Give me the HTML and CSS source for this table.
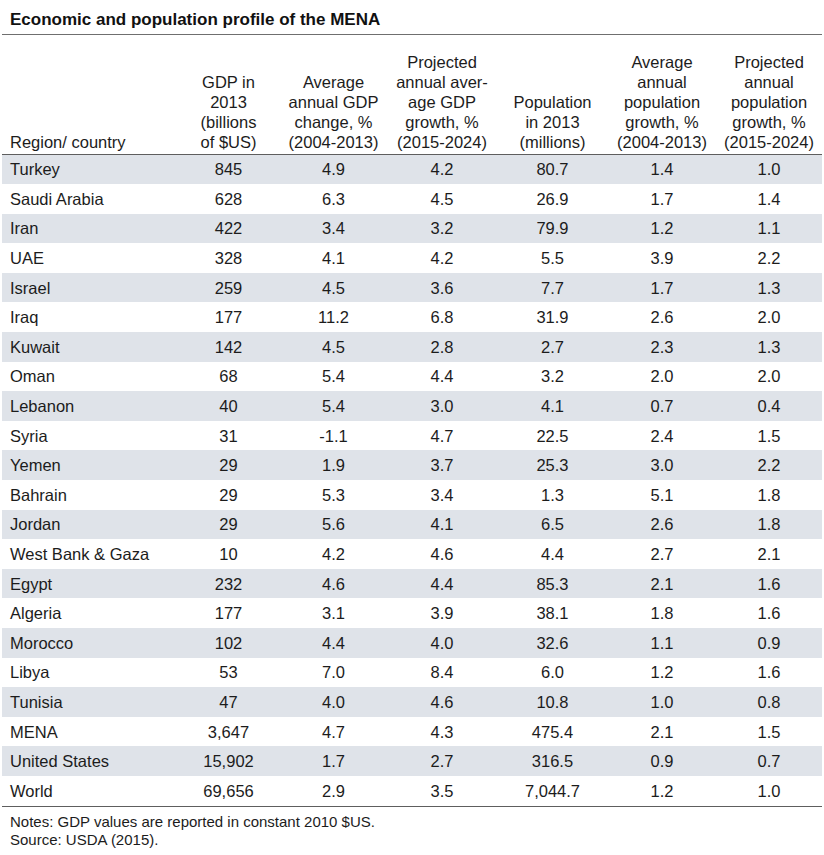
FILE: index.html
```html
<!DOCTYPE html>
<html>
<head>
<meta charset="utf-8">
<link rel="stylesheet" href="styles.css">
</head>
<body>
<div class="page">
  <div class="title">Economic and population profile of the MENA</div>
  <table class="data">
    <colgroup>
      <col class="c1"><col class="c2"><col class="c3"><col class="c4"><col class="c5"><col class="c6"><col class="c7">
    </colgroup>
    <thead>
      <tr>
        <th class="name">Region/ country</th>
        <th>GDP in<br>2013<br>(billions<br>of $US)</th>
        <th>Average<br>annual GDP<br>change, %<br>(2004-2013)</th>
        <th>Projected<br>annual aver-<br>age GDP<br>growth, %<br>(2015-2024)</th>
        <th>Population<br>in 2013<br>(millions)</th>
        <th>Average<br>annual<br>population<br>growth, %<br>(2004-2013)</th>
        <th>Projected<br>annual<br>population<br>growth, %<br>(2015-2024)</th>
      </tr>
    </thead>
    <tbody>
      <tr><td class="name">Turkey</td><td>845</td><td>4.9</td><td>4.2</td><td>80.7</td><td>1.4</td><td>1.0</td></tr>
      <tr><td class="name">Saudi Arabia</td><td>628</td><td>6.3</td><td>4.5</td><td>26.9</td><td>1.7</td><td>1.4</td></tr>
      <tr><td class="name">Iran</td><td>422</td><td>3.4</td><td>3.2</td><td>79.9</td><td>1.2</td><td>1.1</td></tr>
      <tr><td class="name">UAE</td><td>328</td><td>4.1</td><td>4.2</td><td>5.5</td><td>3.9</td><td>2.2</td></tr>
      <tr><td class="name">Israel</td><td>259</td><td>4.5</td><td>3.6</td><td>7.7</td><td>1.7</td><td>1.3</td></tr>
      <tr><td class="name">Iraq</td><td>177</td><td>11.2</td><td>6.8</td><td>31.9</td><td>2.6</td><td>2.0</td></tr>
      <tr><td class="name">Kuwait</td><td>142</td><td>4.5</td><td>2.8</td><td>2.7</td><td>2.3</td><td>1.3</td></tr>
      <tr><td class="name">Oman</td><td>68</td><td>5.4</td><td>4.4</td><td>3.2</td><td>2.0</td><td>2.0</td></tr>
      <tr><td class="name">Lebanon</td><td>40</td><td>5.4</td><td>3.0</td><td>4.1</td><td>0.7</td><td>0.4</td></tr>
      <tr><td class="name">Syria</td><td>31</td><td>-1.1</td><td>4.7</td><td>22.5</td><td>2.4</td><td>1.5</td></tr>
      <tr><td class="name">Yemen</td><td>29</td><td>1.9</td><td>3.7</td><td>25.3</td><td>3.0</td><td>2.2</td></tr>
      <tr><td class="name">Bahrain</td><td>29</td><td>5.3</td><td>3.4</td><td>1.3</td><td>5.1</td><td>1.8</td></tr>
      <tr><td class="name">Jordan</td><td>29</td><td>5.6</td><td>4.1</td><td>6.5</td><td>2.6</td><td>1.8</td></tr>
      <tr><td class="name">West Bank &amp; Gaza</td><td>10</td><td>4.2</td><td>4.6</td><td>4.4</td><td>2.7</td><td>2.1</td></tr>
      <tr><td class="name">Egypt</td><td>232</td><td>4.6</td><td>4.4</td><td>85.3</td><td>2.1</td><td>1.6</td></tr>
      <tr><td class="name">Algeria</td><td>177</td><td>3.1</td><td>3.9</td><td>38.1</td><td>1.8</td><td>1.6</td></tr>
      <tr><td class="name">Morocco</td><td>102</td><td>4.4</td><td>4.0</td><td>32.6</td><td>1.1</td><td>0.9</td></tr>
      <tr><td class="name">Libya</td><td>53</td><td>7.0</td><td>8.4</td><td>6.0</td><td>1.2</td><td>1.6</td></tr>
      <tr><td class="name">Tunisia</td><td>47</td><td>4.0</td><td>4.6</td><td>10.8</td><td>1.0</td><td>0.8</td></tr>
      <tr><td class="name">MENA</td><td>3,647</td><td>4.7</td><td>4.3</td><td>475.4</td><td>2.1</td><td>1.5</td></tr>
      <tr><td class="name">United States</td><td>15,902</td><td>1.7</td><td>2.7</td><td>316.5</td><td>0.9</td><td>0.7</td></tr>
      <tr><td class="name">World</td><td>69,656</td><td>2.9</td><td>3.5</td><td>7,044.7</td><td>1.2</td><td>1.0</td></tr>
    </tbody>
  </table>
  <div class="notes">
    <div>Notes: GDP values are reported in constant 2010 $US.</div>
    <div>Source: USDA (2015).</div>
  </div>
</div>
</body>
</html>
```

FILE: styles.css
```css
html, body {
  margin: 0;
  padding: 0;
  background: #ffffff;
}

.page {
  width: 820px;
  margin-left: 2px;
  font-family: "Liberation Sans", Arial, Helvetica, sans-serif;
  color: #1c1c1c;
}

.title {
  font-size: 17px;
  font-weight: bold;
  line-height: 20px;
  padding: 9.5px 0 4px 8px;
  border-bottom: 1.5px solid #6f6f6f;
  color: #111;
}

.data {
  width: 820px;
  border-collapse: collapse;
  table-layout: fixed;
  font-size: 16.5px;
}

.c1 { width: 175px; }
.c2 { width: 103px; }
.c3 { width: 107px; }
.c4 { width: 110px; }
.c5 { width: 111px; }
.c6 { width: 108px; }
.c7 { width: 106px; }

.data th {
  font-weight: normal;
  line-height: 20px;
  padding: 17px 0 2px 0;
  vertical-align: bottom;
  text-align: center;
  border-bottom: 1.5px solid #5e5e5e;
}

.data td {
  height: 29.6px;
  padding: 0;
  text-align: center;
  vertical-align: middle;
  line-height: 20px;
}

.data .name {
  text-align: left;
  padding-left: 8px;
}

.data tbody tr:nth-child(odd) td {
  background: #dfe3e9;
}

.data tbody tr:last-child td {
  border-bottom: 1.5px solid #5e5e5e;
}

.notes {
  font-size: 15px;
  line-height: 18px;
  padding: 6px 0 0 8px;
  color: #1c1c1c;
}
```
